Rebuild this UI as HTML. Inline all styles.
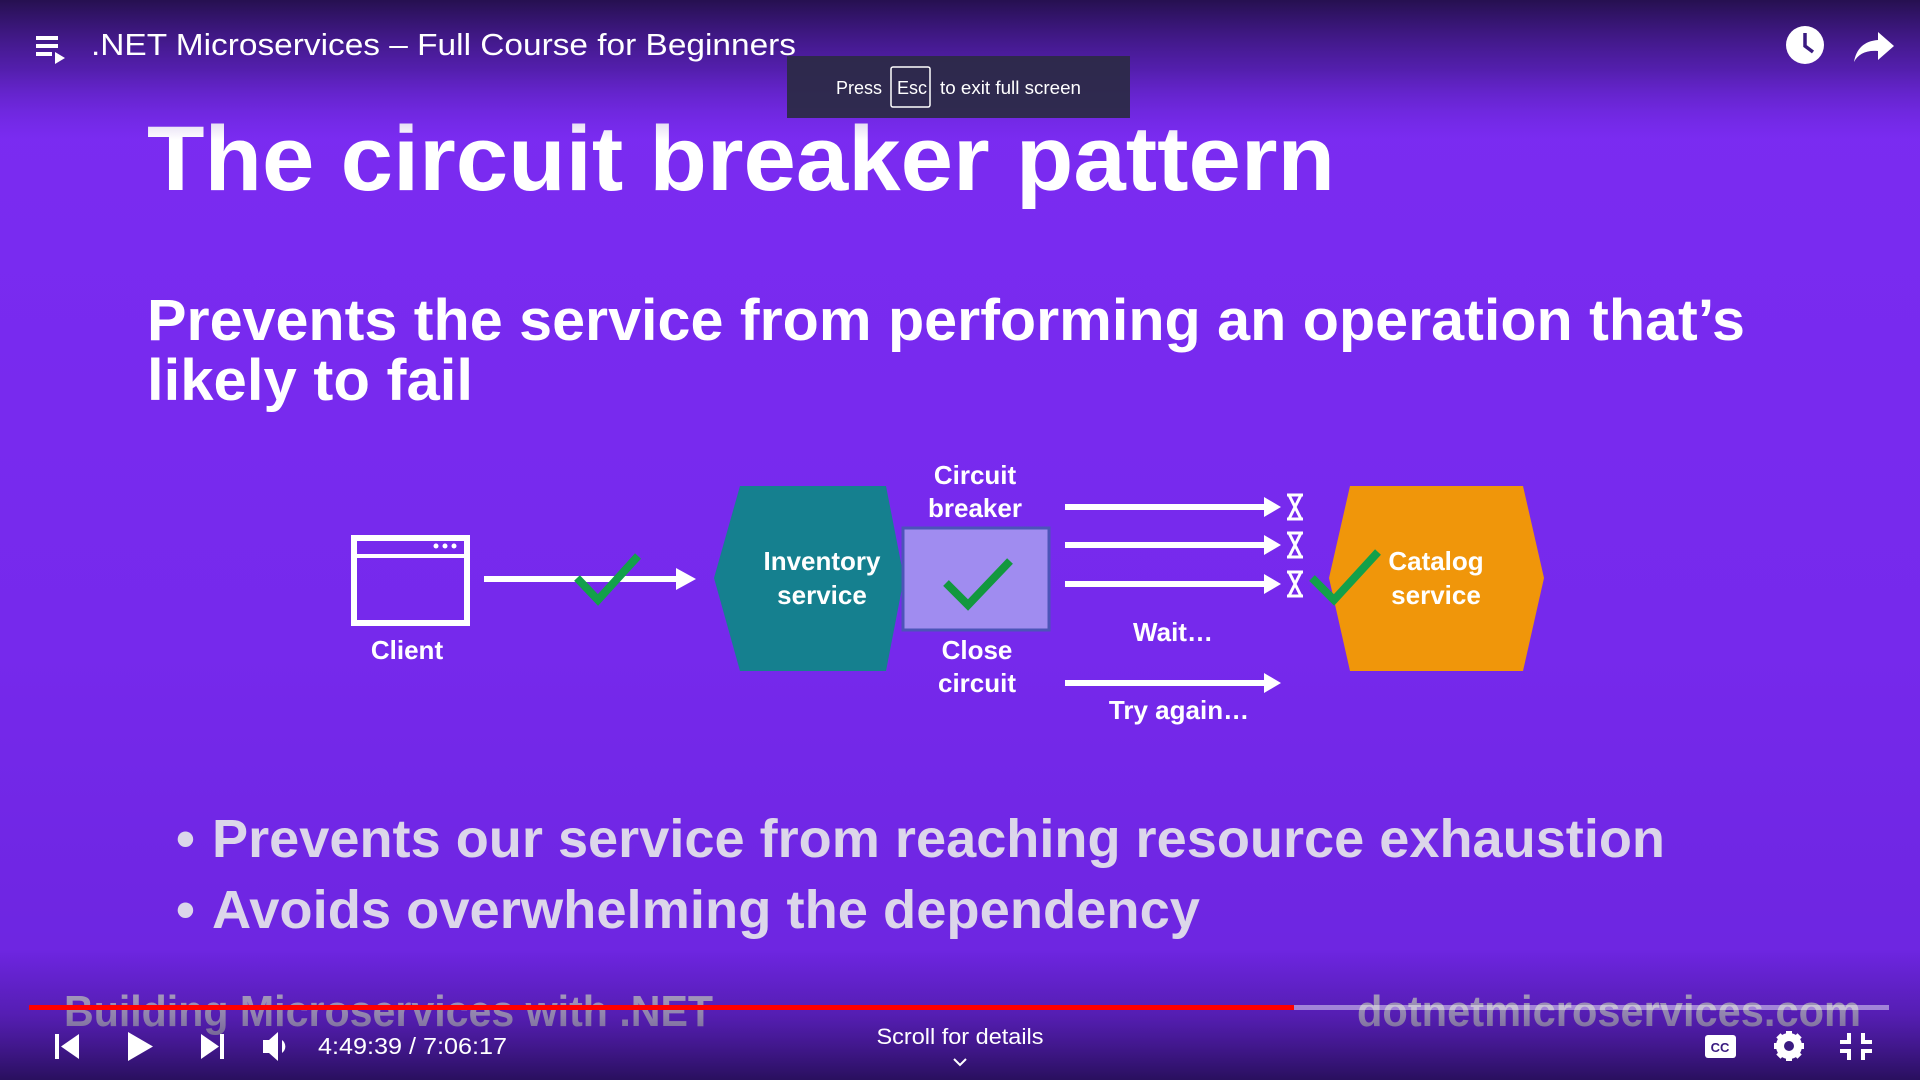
<!DOCTYPE html>
<html><head><meta charset="utf-8"><style>
html,body{margin:0;padding:0;width:1920px;height:1080px;overflow:hidden;background:#7a2bf0}
svg{display:block}
text{font-family:"Liberation Sans",sans-serif}
</style></head><body>
<svg width="1920" height="1080" viewBox="0 0 1920 1080" xmlns="http://www.w3.org/2000/svg">
<defs>
<linearGradient id="bg" x1="0" y1="0" x2="0" y2="1">
<stop offset="0" stop-color="#7b2cf2"/><stop offset="0.6" stop-color="#7629ec"/><stop offset="1" stop-color="#6a24dc"/>
</linearGradient>
<linearGradient id="top" x1="0" y1="0" x2="0" y2="1">
<stop offset="0" stop-color="#261050" stop-opacity="1"/><stop offset="0.5" stop-color="#3a1680" stop-opacity="0.6"/><stop offset="1" stop-color="#5a20c0" stop-opacity="0"/>
</linearGradient>
<linearGradient id="bot" x1="0" y1="0" x2="0" y2="1">
<stop offset="0" stop-color="#2a1060" stop-opacity="0"/><stop offset="0.5" stop-color="#2a1060" stop-opacity="0.35"/><stop offset="1" stop-color="#1e0c48" stop-opacity="0.85"/>
</linearGradient>
</defs>
<rect width="1920" height="1080" fill="url(#bg)"/>

<text x="147" y="190" font-size="92" font-weight="bold" fill="#fff" textLength="1188" lengthAdjust="spacingAndGlyphs">The circuit breaker pattern</text>
<text x="147" y="340" font-size="58" font-weight="bold" fill="#fff" textLength="1598" lengthAdjust="spacingAndGlyphs">Prevents the service from performing an operation that’s</text>
<text x="147" y="400" font-size="58" font-weight="bold" fill="#fff" textLength="326" lengthAdjust="spacingAndGlyphs">likely to fail</text>
<text x="176" y="857" font-size="54" font-weight="bold" fill="#dcd6ea">•</text>
<text x="212" y="857" font-size="54" font-weight="bold" fill="#dcd6ea" textLength="1453" lengthAdjust="spacingAndGlyphs">Prevents our service from reaching resource exhaustion</text>
<text x="176" y="928" font-size="54" font-weight="bold" fill="#dcd6ea">•</text>
<text x="212" y="928" font-size="54" font-weight="bold" fill="#dcd6ea" textLength="988" lengthAdjust="spacingAndGlyphs">Avoids overwhelming the dependency</text>

<g font-weight="bold" fill="#fff" font-size="26" text-anchor="middle">
<rect x="354" y="538" width="113" height="85" fill="none" stroke="#fff" stroke-width="6"/>
<line x1="354" y1="556" x2="467" y2="556" stroke="#fff" stroke-width="4"/>
<circle cx="436" cy="546" r="2.5"/><circle cx="445" cy="546" r="2.5"/><circle cx="454" cy="546" r="2.5"/>
<text x="407" y="659">Client</text>
<line x1="484" y1="579" x2="680" y2="579" stroke="#fff" stroke-width="6"/>
<path d="M676,568 L696,579 L676,590 z" fill="#fff"/>
<path d="M577,578 L598,600 L638,556" fill="none" stroke="#13a04a" stroke-width="8"/>
<polygon points="740,486 886,486 904,578 886,671 740,671 714,578" fill="#15808f"/>
<text x="822" y="570">Inventory</text><text x="822" y="604">service</text>
<rect x="903" y="528" width="146" height="102" fill="#a08cf0" stroke="#4c54b8" stroke-width="3"/>
<path d="M946,583 L968,605 L1010,561" fill="none" stroke="#12983e" stroke-width="8"/>
<text x="975" y="484">Circuit</text><text x="975" y="517">breaker</text>
<text x="977" y="659">Close</text><text x="977" y="692">circuit</text>
<g stroke="#fff" stroke-width="6">
<line x1="1065" y1="507" x2="1268" y2="507"/><line x1="1065" y1="545" x2="1268" y2="545"/>
<line x1="1065" y1="584" x2="1268" y2="584"/><line x1="1065" y1="683" x2="1268" y2="683"/>
</g>
<path d="M1264,497 L1281,507 L1264,517z M1264,535 L1281,545 L1264,555z M1264,574 L1281,584 L1264,594z M1264,673 L1281,683 L1264,693z" fill="#fff"/>
<g fill="none" stroke="#fff" stroke-width="3">
<path d="M1287,495 h16 M1287,519 h16 M1289,495 l12,24 M1301,495 l-12,24"/>
<path d="M1287,533 h16 M1287,557 h16 M1289,533 l12,24 M1301,533 l-12,24"/>
<path d="M1287,572 h16 M1287,596 h16 M1289,572 l12,24 M1301,572 l-12,24"/>
</g>
<text x="1173" y="641">Wait…</text>
<text x="1179" y="719">Try again…</text>
<polygon points="1350,486 1523,486 1544,578 1523,671 1350,671 1329,578" fill="#f0960a"/>
<path d="M1312,578 L1334,600 L1378,552" fill="none" stroke="#13a04a" stroke-width="8"/>
<text x="1436" y="570">Catalog</text><text x="1436" y="604">service</text>
</g>

<text x="64" y="1026" font-size="44" font-weight="bold" fill="#c9c2d8" textLength="649" lengthAdjust="spacingAndGlyphs">Building Microservices with .NET</text>
<text x="1357" y="1026" font-size="44" font-weight="bold" fill="#c9c2d8" textLength="504" lengthAdjust="spacingAndGlyphs">dotnetmicroservices.com</text>

<rect width="1920" height="140" fill="url(#top)"/>
<rect y="950" width="1920" height="130" fill="url(#bot)"/>

<g fill="#fff">
<rect x="36" y="36" width="22" height="4"/><rect x="36" y="44" width="22" height="4"/><rect x="36" y="52" width="16" height="4"/>
<path d="M55,52 L65,58 L55,64z"/>
</g>
<text x="91" y="55" font-size="31" fill="#fff" textLength="705" lengthAdjust="spacingAndGlyphs">.NET Microservices – Full Course for Beginners</text>
<circle cx="1805" cy="45" r="19" fill="#fff"/>
<path d="M1805,33 V46 L1813,52" fill="none" stroke="#3a1a80" stroke-width="3.5"/>
<path d="M1878,32 L1894,46 L1878,60 V51 C1866,50 1858,54 1854,62 C1856,49 1864,41 1878,40z" fill="#fff"/>

<rect x="787" y="56" width="343" height="62" fill="#2c2a48" opacity="0.95"/>
<text x="836" y="94" font-size="18" fill="#fff">Press</text>
<rect x="891" y="67" width="39" height="40" fill="none" stroke="#fff" stroke-width="1.5" rx="2"/>
<text x="897" y="94" font-size="18" fill="#fff">Esc</text>
<text x="940" y="94" font-size="18" fill="#fff" textLength="141" lengthAdjust="spacingAndGlyphs">to exit full screen</text>

<rect x="29" y="1005" width="1860" height="5" fill="#fff" opacity="0.45"/>
<rect x="29" y="1005" width="1265" height="5" fill="#ff0000"/>

<g fill="#fff">
<rect x="55" y="1034" width="4" height="25"/><path d="M79,1034 V1059 L61,1046.5z"/>
<path d="M128,1032 L153,1046.5 L128,1061z"/>
<path d="M201,1034 V1059 L219,1046.5z"/><rect x="220" y="1034" width="4" height="25"/>
<path d="M263,1040 h6 l9,-8 v29 l-9,-8 h-6z"/><path d="M282,1040 a8,8 0 0 1 0,13 z"/>
</g>
<text x="318" y="1054" font-size="23" fill="#fff" textLength="189" lengthAdjust="spacingAndGlyphs">4:49:39 / 7:06:17</text>
<text x="960" y="1044" font-size="22" fill="#fff" text-anchor="middle" textLength="167" lengthAdjust="spacingAndGlyphs">Scroll for details</text>
<path d="M954,1059 L960,1065 L966,1059" fill="none" stroke="#fff" stroke-width="2"/>
<rect x="1705" y="1035" width="31" height="23" rx="3" fill="#fff"/>
<text x="1720" y="1052" font-size="13" font-weight="bold" fill="#3a1a80" text-anchor="middle">CC</text>
<g transform="translate(1789,1046)">
<circle r="10" fill="none" stroke="#fff" stroke-width="6"/>
<g fill="#fff"><rect x="-3" y="-15" width="6" height="30"/><rect x="-15" y="-3" width="30" height="6"/>
<rect x="-3" y="-15" width="6" height="30" transform="rotate(45)"/><rect x="-3" y="-15" width="6" height="30" transform="rotate(-45)"/></g>
<circle r="5" fill="#3a1a80"/>
</g>
<g fill="none" stroke="#fff" stroke-width="4">
<path d="M1849,1033 V1042 H1840"/><path d="M1863,1033 V1042 H1872"/>
<path d="M1840,1051 H1849 V1060"/><path d="M1872,1051 H1863 V1060"/>
</g>
</svg>
</body></html>
